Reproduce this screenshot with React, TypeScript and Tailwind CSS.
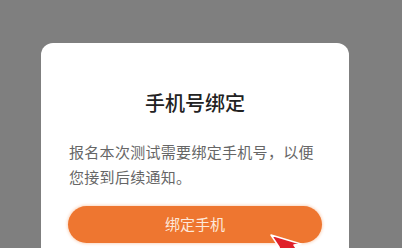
const App = () => {
  return (
    <div
      className="relative h-[248px] w-[402px] overflow-hidden bg-[#7f7f7f]"
      style={{ fontFamily: '"Noto Sans CJK SC", "Noto Sans", sans-serif' }}
    >
      <div className="ml-[41px] mt-[43px] h-[260px] w-[308px] rounded-[12px] bg-white px-[27px] pt-[46px]">
        <h2 className="text-center text-[20px] font-medium leading-[28px] text-[#222222]">
          手机号绑定
        </h2>
        <p className="mt-[22px] pl-[1px] text-[15px] leading-[25px] tracking-[0.3px] text-[#666666]">
          报名本次测试需要绑定手机号，以便
          <br />
          您接到后续通知。
        </p>
        <button className="mt-[17px] flex h-[37px] w-full items-center justify-center rounded-full bg-[#ee7630] text-[15px] text-[#fde8da] shadow-[0_0_3px_1px_#fbd9c4]">
          绑定手机
        </button>
      </div>
      <svg
        className="absolute left-[268px] top-[233px]"
        width="36"
        height="18"
        viewBox="0 0 36 18"
      >
        <polygon points="3,2 33,11 26,12 30,18 12,18 11,14" fill="#e0202a" stroke="#ffffff" strokeWidth="1.5" strokeLinejoin="round" />
      </svg>
    </div>
  );
};

export default App;
